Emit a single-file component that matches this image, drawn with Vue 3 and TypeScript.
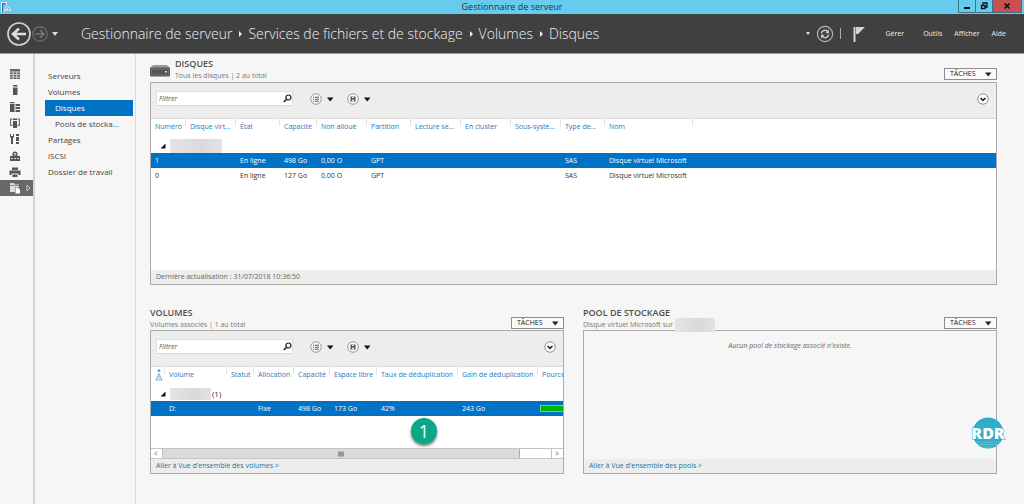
<script setup lang="ts">
import { ref } from 'vue'

interface Disk {
  id: number
  state: string
  capacity: string
  free: string
  partition: string
  bus: string
  name: string
}

const crumbs = ['Gestionnaire de serveur', 'Services de fichiers et de stockage', 'Volumes', 'Disques']
const menus = ['Gérer', 'Outils', 'Afficher', 'Aide']
const rail = ['dashboard', 'local', 'all', 'ad', 'dhcp', 'dns', 'print', 'files']
const railLabels = ['Tableau de bord', 'Serveur local', 'Tous les serveurs', 'AD DS', 'DHCP', 'DNS', 'Impression', 'Fichiers']
const nav = [
  { label: 'Serveurs', sub: false },
  { label: 'Volumes', sub: false },
  { label: 'Disques', sub: true },
  { label: 'Pools de stocka...', sub: true },
  { label: 'Partages', sub: false },
  { label: 'iSCSI', sub: false },
  { label: 'Dossier de travail', sub: false },
]
const diskCols = ['Numéro', 'Disque virt...', 'État', 'Capacité', 'Non alloué', 'Partition', 'Lecture se...', 'En cluster', 'Sous-systè...', 'Type de...', 'Nom']
const volCols = ['Volume', 'Statut', 'Allocation', 'Capacité', 'Espace libre', 'Taux de déduplication', 'Gain de déduplication', 'Pource']
const disks: Disk[] = [
  { id: 1, state: 'En ligne', capacity: '498 Go', free: '0,00 O', partition: 'GPT', bus: 'SAS', name: 'Disque virtuel Microsoft' },
  { id: 0, state: 'En ligne', capacity: '127 Go', free: '0,00 O', partition: 'GPT', bus: 'SAS', name: 'Disque virtuel Microsoft' },
]
const selected = ref(1)
const diskFilter = ref('')
const volFilter = ref('')
</script>

<template>
  <div class="app">
    <header class="titlebar">
      <svg class="app-icon" viewBox="0 0 12 12" aria-hidden="true">
        <path d="M1 1h6v3H4v7H1z" fill="#e8f1fa" />
        <path d="M2 2h4v1.500H3.500V11H2z" fill="#3b6fb5" />
        <path d="M4 11V8l3-3 4 3v3z" fill="#dfe9f4" />
        <path d="M5 8.500L7 6.500l3 2M5 10.300h5.500" fill="none" stroke="#7d97bd" stroke-width="1" />
      </svg>
      <h1>Gestionnaire de serveur</h1>
      <div class="win">
        <button aria-label="Réduire"><svg viewBox="0 0 8 8"><path d="M1 5h6v2H1z" fill="#111" /></svg></button>
        <button aria-label="Restaurer"><svg viewBox="0 0 8 8"><path d="M3 2.500V1h4v4H5.500M1.500 3.500h3.500v3H1.500z" fill="none" stroke="#111" stroke-width="1.300" /></svg></button>
        <button class="close" aria-label="Fermer"><svg viewBox="0 0 8 8"><path d="M1.500 1.500l5 5M6.500 1.500l-5 5" stroke="#111" stroke-width="1.600" /></svg></button>
      </div>
    </header>

    <div class="bar">
      <button class="plain back" aria-label="Précédent">
        <svg viewBox="0 0 24 24"><circle cx="12" cy="12" r="11" fill="none" stroke="#cfcfcf" stroke-width="1.700" /><path d="M19 12H6M12 6.500L6 12l6 5.500" fill="none" stroke="#dedede" stroke-width="2.600" /></svg>
      </button>
      <button class="plain fwd" aria-label="Suivant">
        <svg viewBox="0 0 16 16"><circle cx="8" cy="8" r="7.200" fill="none" stroke="#707070" stroke-width="1.200" /><path d="M3.500 8h8M8 4l4 4-4 4" fill="none" stroke="#777" stroke-width="1.600" /></svg>
      </button>
      <button class="plain drop" aria-label="Historique"><svg viewBox="0 0 8 4"><path d="M1 0h6L4 4z" fill="#ddd" /></svg></button>
      <nav class="crumbs" aria-label="Emplacement">
        <template v-for="(c, i) in crumbs" :key="c">
          <svg v-if="i" viewBox="0 0 16 8" aria-hidden="true"><path d="M7 1l3 3-3 3z" fill="#eee" /></svg>
          <a href="#">{{ c }}</a>
        </template>
      </nav>
      <div class="actions">
        <button class="plain more" aria-label="Options"><svg viewBox="0 0 6 4"><path d="M1 0h4L3 3z" fill="#ddd" /></svg></button>
        <button class="plain refresh" aria-label="Actualiser">
          <svg viewBox="0 0 18 18"><circle cx="9" cy="9" r="7.600" fill="none" stroke="#bbb" stroke-width="1.100" /><path d="M5.300 8.300A3.600 3.600 0 0 1 11.500 6.500M12.700 9.700A3.600 3.600 0 0 1 6.500 11.500" fill="none" stroke="#ccc" stroke-width="1.500" /><path d="M13 4.500v3.700H9.300zM5 13.500V9.800h3.700z" fill="#ccc" /></svg>
        </button>
        <span class="sep"></span>
        <button class="plain flag" aria-label="Notifications"><svg viewBox="0 0 12 16"><path d="M1.500 1v15" stroke="#d5d5d5" stroke-width="2" /><path d="M3 1h9l-7 7H3z" fill="#d5d5d5" /></svg></button>
        <button v-for="m in menus" :key="m" class="plain menu">{{ m }}</button>
      </div>
    </div>

    <div class="body">
      <nav class="rail" aria-label="Rôles">
        <a v-for="(r, i) in rail" :key="r" href="#" :class="{ on: r === 'files' }" :aria-label="railLabels[i]">
          <svg viewBox="0 0 12 12">
            <template v-if="r === 'dashboard'"><path d="M1 1h10v10H1z" fill="#666" /><path d="M1 4h10M1 6.500h10M1 9h10M4.200 3.500V11M7.800 3.500V11" stroke="#f6f6f6" stroke-width=".7" /></template>
            <path v-else-if="r === 'local'" d="M4 1h4.500v1.500H4zM4 3.500h4.500V11H4z" fill="#555" />
            <template v-else-if="r === 'all'"><path d="M1 1h4.500v1.200H1zM1 3h4.500v8H1zM6.500 3H11v2H6.500zM6.500 6H11v2H6.500zM6.500 9H11v2H6.500z" fill="#555" /></template>
            <template v-else-if="r === 'ad'"><path d="M1 1.500h2.500v1.200H2.200v5h1.300V9H1zM11 1.500H8.500v1.200h1.300v5H8.500V9H11z" fill="#777" /><path d="M4 1.500h4v1.500H4zM4 4h4v7H4z" fill="#555" /></template>
            <template v-else-if="r === 'dhcp'"><path d="M1 1h1v2h2V1h1v3L4 5v6H2V5L1 4zM7 1h3v2H7zM7 4h3v4H7zM7 9h3v2H7z" fill="#555" /></template>
            <template v-else-if="r === 'dns'"><path d="M3.500 6V4a2.500 2.500 0 0 1 5 0v2H11v5H1V6z" fill="#555" /><path d="M5 3.500h2M5 5h2M2 8.500h2M5 8.500h2M8 8.500h2" fill="none" stroke="#f6f6f6" stroke-width=".8" /></template>
            <template v-else-if="r === 'print'"><path d="M3 1.500h6V4H3zM0.500 4.500h11v4.500H9.500V7.500h-7V9H.5zM3.500 8.500h5v2.500h-5z" fill="#555" /></template>
            <template v-else><path d="M1 1h4l1 1.500h4V5H6v5H1z" fill="#ddd" /><path d="M6.500 5.500H9L11 7.500v4H6.500z" fill="#fff" /><path d="M1 3.500h9" stroke="#777" stroke-width=".7" /></template>
          </svg>
          <svg v-if="r === 'files'" class="open" viewBox="0 0 5 8"><path d="M1 1l3 3-3 3z" fill="none" stroke="#ddd" stroke-width=".8" /></svg>
        </a>
      </nav>

      <nav class="side" aria-label="Services de fichiers">
        <a v-for="n in nav" :key="n.label" href="#" :class="{ sub: n.sub, on: n.label === 'Disques' }">{{ n.label }}</a>
      </nav>

      <main>
        <section>
          <div class="head">
            <svg class="disk" viewBox="0 0 20 13" aria-hidden="true"><path d="M3 1h14l3 3H0z" fill="#9a9a9a" /><rect y="3.500" width="20" height="9" rx="1" fill="#555" /><rect x="1.500" y="5" width="17" height="6" rx="1" fill="none" stroke="#888" stroke-width=".6" /><path d="M15 7h2v1.500h-2z" fill="#ddd" /></svg>
            <div class="names"><h2>DISQUES</h2><p>Tous les disques | 2 au total</p></div>
            <button class="tasks">TÂCHES<svg viewBox="0 0 8 5"><path d="M1 .5h6.500L4.200 4.500z" fill="#222" /></svg></button>
          </div>
          <div class="panel">
            <div class="tools">
              <div class="filter">
                <input v-model="diskFilter" type="text" placeholder="Filtrer" aria-label="Filtrer les disques" />
                <svg viewBox="0 0 9 9"><circle cx="5.400" cy="3.500" r="2.500" fill="none" stroke="#222" stroke-width="1.200" /><path d="M3.500 5.300L.8 8" stroke="#222" stroke-width="1.600" /></svg>
              </div>
              <button class="plain pick" aria-label="Affichage"><svg viewBox="0 0 24 12"><circle cx="6" cy="6" r="5.300" fill="#f8f8f8" stroke="#777" stroke-width=".7" /><path d="M3 4.200h1.200M3 6.200h1.200M3 8.200h1.200M5 4.200h4M5 6.200h4M5 8.200h4" stroke="#333" stroke-width=".8" /><path d="M17 4.500h6.500L20.200 8.500z" fill="#111" /></svg></button>
              <button class="plain pick" aria-label="Enregistrer"><svg viewBox="0 0 24 12"><circle cx="6" cy="6" r="5.300" fill="#f8f8f8" stroke="#777" stroke-width=".7" /><path d="M3.500 3.500h5v5h-5z" fill="#555" /><path d="M5 3.500h2v1.500H5zM5 6.500h2v2H5z" fill="#ddd" /><path d="M17 4.500h6.500L20.200 8.500z" fill="#111" /></svg></button>
              <button class="plain fold" aria-label="Développer"><svg viewBox="0 0 12 12"><circle cx="6" cy="6" r="5.200" fill="#fff" stroke="#777" stroke-width=".8" /><path d="M3.500 5L6 7.300 8.500 5" fill="none" stroke="#222" stroke-width="1.600" /></svg></button>
            </div>
            <div class="list tall">
              <table>
                <colgroup><col class="w35" /><col class="w50" /><col class="w44" /><col class="w37" /><col class="w50" /><col class="w44" /><col class="w50" /><col class="w50" /><col class="w50" /><col class="w44" /><col class="w88" /><col /></colgroup>
                <thead><tr><th v-for="c in diskCols" :key="c"><span>{{ c }}</span></th><th class="rest"></th></tr></thead>
                <tbody>
                  <tr class="group"><td colspan="12"><div><svg viewBox="0 0 6 6"><path d="M5.500.5v5H.5z" fill="#111" /></svg><i class="mask"></i></div></td></tr>
                  <tr v-for="d in disks" :key="d.id" :class="{ on: d.id === selected }" @click="selected = d.id">
                    <td>{{ d.id }}</td><td></td><td>{{ d.state }}</td><td>{{ d.capacity }}</td><td>{{ d.free }}</td><td>{{ d.partition }}</td><td></td><td></td><td></td><td>{{ d.bus }}</td><td>{{ d.name }}</td><td></td>
                  </tr>
                </tbody>
              </table>
            </div>
            <div class="foot">Dernière actualisation : 31/07/2018 10:36:50</div>
          </div>
        </section>

        <div class="pair">
          <section>
            <div class="head">
              <div class="names"><h2>VOLUMES</h2><p>Volumes associés | 1 au total</p></div>
              <button class="tasks">TÂCHES<svg viewBox="0 0 8 5"><path d="M1 .5h6.500L4.200 4.500z" fill="#222" /></svg></button>
            </div>
            <div class="panel">
              <div class="tools">
                <div class="filter">
                  <input v-model="volFilter" type="text" placeholder="Filtrer" aria-label="Filtrer les volumes" />
                  <svg viewBox="0 0 9 9"><circle cx="5.400" cy="3.500" r="2.500" fill="none" stroke="#222" stroke-width="1.200" /><path d="M3.500 5.300L.8 8" stroke="#222" stroke-width="1.600" /></svg>
                </div>
                <button class="plain pick" aria-label="Affichage"><svg viewBox="0 0 24 12"><circle cx="6" cy="6" r="5.300" fill="#f8f8f8" stroke="#777" stroke-width=".7" /><path d="M3 4.200h1.200M3 6.200h1.200M3 8.200h1.200M5 4.200h4M5 6.200h4M5 8.200h4" stroke="#333" stroke-width=".8" /><path d="M17 4.500h6.500L20.200 8.500z" fill="#111" /></svg></button>
                <button class="plain pick" aria-label="Enregistrer"><svg viewBox="0 0 24 12"><circle cx="6" cy="6" r="5.300" fill="#f8f8f8" stroke="#777" stroke-width=".7" /><path d="M3.500 3.500h5v5h-5z" fill="#555" /><path d="M5 3.500h2v1.500H5zM5 6.500h2v2H5z" fill="#ddd" /><path d="M17 4.500h6.500L20.200 8.500z" fill="#111" /></svg></button>
                <button class="plain fold" aria-label="Développer"><svg viewBox="0 0 12 12"><circle cx="6" cy="6" r="5.200" fill="#fff" stroke="#777" stroke-width=".8" /><path d="M3.500 5L6 7.300 8.500 5" fill="none" stroke="#222" stroke-width="1.600" /></svg></button>
              </div>
              <div class="list short">
                <table class="wide">
                  <colgroup><col class="w14" /><col class="w62" /><col class="w27" /><col class="w40" /><col class="w36" /><col class="w47" /><col class="w81" /><col class="w80" /><col class="w80" /></colgroup>
                  <thead><tr>
                    <th class="warn" aria-label="Alerte"><svg viewBox="0 0 8 12"><path d="M2 2.500L4 .3l2 2.200z" fill="#2a78bd" /><path d="M1 11L4 4.500 7 11zM4 7v2.500" fill="none" stroke="#5b93c4" stroke-width=".8" /></svg></th>
                    <th v-for="c in volCols" :key="c"><span>{{ c }}</span></th>
                  </tr></thead>
                  <tbody>
                    <tr class="group"><td colspan="9"><div><svg viewBox="0 0 6 6"><path d="M5.500.5v5H.5z" fill="#111" /></svg><i class="mask small"></i>(1)</div></td></tr>
                    <tr class="on"><td></td><td>D:</td><td></td><td>Fixe</td><td>498 Go</td><td>173 Go</td><td>42%</td><td>243 Go</td><td class="usage"><div class="meter"></div></td></tr>
                  </tbody>
                </table>
              </div>
              <div class="scroll">
                <button class="plain" aria-label="Défiler à gauche"><svg viewBox="0 0 10 10"><path d="M6 3L4 5l2 2" fill="none" stroke="#555" /></svg></button>
                <div class="track"><div class="thumb"><svg viewBox="0 0 6 6"><path d="M1 .5v5M3 .5v5M5 .5v5" stroke="#555" /></svg></div></div>
                <button class="plain" aria-label="Défiler à droite"><svg viewBox="0 0 10 10"><path d="M4 3l2 2-2 2" fill="none" stroke="#555" /></svg></button>
              </div>
              <div class="foot"><a href="#">Aller à Vue d'ensemble des volumes &gt;</a></div>
              <div class="badge">1</div>
            </div>
          </section>

          <section>
            <div class="head">
              <div class="names"><h2>POOL DE STOCKAGE</h2><p>Disque virtuel Microsoft sur <i class="mask host"></i></p></div>
              <button class="tasks">TÂCHES<svg viewBox="0 0 8 5"><path d="M1 .5h6.500L4.200 4.500z" fill="#222" /></svg></button>
            </div>
            <div class="panel">
              <p class="empty">Aucun pool de stockage associé n'existe.</p>
              <div class="foot"><a href="#">Aller à Vue d'ensemble des pools &gt;</a></div>
              <svg class="rdr" viewBox="0 0 36 32" role="img" aria-label="RDR">
                <circle cx="18" cy="16" r="15.500" fill="#2fadc9" />
                <path d="M6 25h24M8 27.500h20M12 30h12" stroke="#83cddd" stroke-width=".6" />
                <text x="18" y="22">RDR</text>
              </svg>
            </div>
          </section>
        </div>
      </main>
    </div>
  </div>
</template>

<style>
body { margin: 0; background: #f6f6f6; }
</style>

<style scoped>
.app { min-height: 100vh; display: flex; flex-direction: column; font-family: "Open Sans", "Noto Sans", sans-serif; font-size: 7px; line-height: 12px; color: #333; background: #f6f6f6; }
.app * { box-sizing: border-box; }
svg { display: block; }
a { color: inherit; text-decoration: none; }
button { font: inherit; color: inherit; cursor: pointer; }
h1, h2, p { margin: 0; font-weight: 400; }
.plain { border: 0; padding: 0; background: none; }
.titlebar { height: 14px; background: #66cbed; display: grid; grid-template-columns: 1fr auto 1fr; align-items: center; }
.titlebar h1 { font-size: 9px; line-height: 14px; color: #17394a; }
.app-icon { width: 12px; height: 12px; }
.win { justify-self: end; align-self: start; display: flex; margin-right: 2px; border: 1px solid #39738a; border-top: 0; }
.win button { width: 17px; height: 12px; border: 0; border-right: 1px solid #39738a; background: #66cbed; padding: 0; display: grid; place-items: center; }
.win .close { width: 28px; border-right: 0; background: #c75050; }
.win svg { width: 8px; height: 8px; }
.bar { height: 39px; background: #404040; color: #ececec; display: flex; align-items: center; padding: 0 18px 0 7px; }
.back svg { width: 24px; height: 24px; }
.fwd { margin-left: 1px; }
.fwd svg { width: 16px; height: 16px; }
.drop { margin-left: 3px; }
.drop svg { width: 8px; height: 4px; }
.crumbs { display: flex; align-items: center; margin-left: 22px; font-size: 14px; line-height: 20px; font-weight: 300; color: #f0f0f0; white-space: nowrap; }
.crumbs svg { width: 16px; height: 8px; }
.actions { margin-left: auto; display: flex; align-items: center; }
.more svg { width: 6px; height: 4px; }
.refresh { margin-left: 5px; }
.refresh svg { width: 18px; height: 18px; }
.sep { width: 1px; height: 11px; margin: 0 12px 0 6px; background: #aaa; }
.flag { margin-right: 8px; }
.flag svg { width: 12px; height: 16px; }
.menu { margin-left: 12px; font-size: 7px; line-height: 12px; }
.flag + .menu { margin-right: 7px; }
.body { flex: 1; display: flex; border-top: 1px solid #999; }
.rail { width: 35px; flex: none; padding-top: 12px; border-right: 2px solid #d4d4d4; }
.rail a { height: 16px; display: flex; align-items: center; padding-left: 9px; }
.rail a:nth-child(3n) { margin-top: 1px; }
.rail svg { width: 12px; height: 12px; }
.rail .open { width: 5px; height: 8px; margin-left: 5px; }
.rail .on { background: #686868; }
.side { width: 101px; flex: none; padding: 14px 2px 0 10px; border-right: 1px solid #dcdcdc; font-size: 8px; line-height: 16px; color: #444; }
.side a { display: block; padding-left: 3px; white-space: nowrap; }
.side .sub { padding-left: 10px; }
.side .on { background: #0072c6; color: #fff; }
main { flex: 1; min-width: 0; padding: 4px 27px 31px 14px; }
.head { height: 24px; display: flex; align-items: flex-end; padding-bottom: 1px; }
.disk { width: 20px; height: 13px; margin: 0 5px 4px 0; }
.names { flex: 1; align-self: flex-start; }
h2 { font-size: 9px; line-height: 12px; font-weight: 600; color: #505050; }
.names p { font-size: 7px; line-height: 12px; color: #777; white-space: nowrap; display: flex; }
.tasks { width: 53px; height: 12px; margin-bottom: 1px; padding: 0 4px 0 5px; border: 1px solid #8e8e8e; background: #fafafa; color: #222; font-size: 7px; line-height: 10px; display: flex; align-items: center; justify-content: space-between; }
.tasks svg { width: 8px; height: 5px; }
.panel { position: relative; border: 1px solid #aaa; }
.tools { height: 36px; padding: 0 7px 4px 5px; background: #ededed; border-bottom: 1px solid #ddd; display: flex; align-items: center; }
.filter { width: 137px; height: 15px; margin-right: 5px; background: #fff; border: 1px solid #ddd; display: flex; align-items: center; }
.filter input { flex: 1; min-width: 0; height: 13px; border: 0; outline: 0; padding: 0 2px; background: none; font: inherit; font-style: italic; }
.filter input::placeholder { color: #555; opacity: 1; }
.filter svg { width: 9px; height: 9px; }
.pick { margin-left: 13px; }
.filter + .pick { margin-left: 12px; }
.pick svg { width: 24px; height: 12px; }
.fold { margin-left: auto; }
.fold svg { width: 12px; height: 12px; }
.list { background: #fff; overflow: hidden; }
.tall { min-height: 151px; }
.short { min-height: 81px; }
table { width: 100%; border-collapse: collapse; table-layout: fixed; }
.wide { width: 467px; }
.w14 { width: 14px; } .w27 { width: 27px; } .w35 { width: 35px; } .w36 { width: 36px; } .w37 { width: 37px; }
.w40 { width: 40px; } .w44 { width: 44px; } .w47 { width: 47px; } .w50 { width: 50px; } .w62 { width: 62px; }
.w80 { width: 80px; } .w81 { width: 81px; } .w88 { width: 88px; }
th, td { padding: 0 0 0 4px; text-align: left; white-space: nowrap; font-weight: 400; }
th { height: 19px; padding-bottom: 3px; color: #2a78bd; background: linear-gradient(#e2e2e2, #e2e2e2) right top / 1px 7px no-repeat; }
th.rest { background: none; }
td { height: 15px; }
.warn svg { width: 8px; height: 12px; }
.on td { background: #0072c6; color: #fff; }
.group div { display: flex; align-items: center; padding-left: 5px; height: 15px; font-size: 8px; }
.group svg { width: 6px; height: 6px; margin-right: 4px; }
.mask { display: block; width: 52px; height: 14px; background: linear-gradient(90deg, #e4e4e4, #dadada 60%, #e2e2e2); }
.mask.small { width: 41px; height: 12px; margin-right: 1px; }
.mask.host { width: 40px; height: 14px; margin: -1px 0 -1px 2px; position: relative; z-index: 1; }
.usage { padding-left: 2px; }
.meter { height: 7px; background: #00b400; border: 1px solid #79cf7c; }
.scroll { height: 11px; display: flex; background: #fff; border: 1px solid #c4c4c4; border-width: 1px 0; }
.scroll button { width: 11px; }
.scroll button svg { width: 10px; height: 9px; }
.track { flex: 1; border: 1px solid #c4c4c4; border-width: 0 1px; }
.thumb { width: 92%; height: 9px; background: #dadada; border-right: 1px solid #aaa; display: grid; place-items: center; }
.thumb svg { width: 6px; height: 6px; }
.foot { height: 14px; padding: 0 5px; background: #ededed; color: #666; line-height: 13px; }
.foot a { color: #1f7296; }
.pair { display: grid; grid-template-columns: 1fr 1fr; gap: 19px; margin-top: 22px; }
.pair section { display: flex; flex-direction: column; min-width: 0; }
.pair .head { height: 23px; padding-bottom: 0; }
.pair .panel { flex: 1; display: flex; flex-direction: column; }
.empty { flex: 1; padding-top: 9px; text-align: center; font-style: italic; color: #666; }
.badge { position: absolute; left: 260px; top: 87px; width: 26px; height: 26px; border-radius: 50%; background: #0aa886; color: #fff; font-size: 18px; line-height: 26px; text-align: center; box-shadow: 0 2px 3px #0008; }
.rdr { position: absolute; right: -10px; bottom: 24px; width: 36px; height: 32px; overflow: visible; }
.rdr text { font-size: 16px; font-weight: 800; text-anchor: middle; fill: #fff; stroke: #2fadc9; stroke-width: 1px; paint-order: stroke; }
</style>
